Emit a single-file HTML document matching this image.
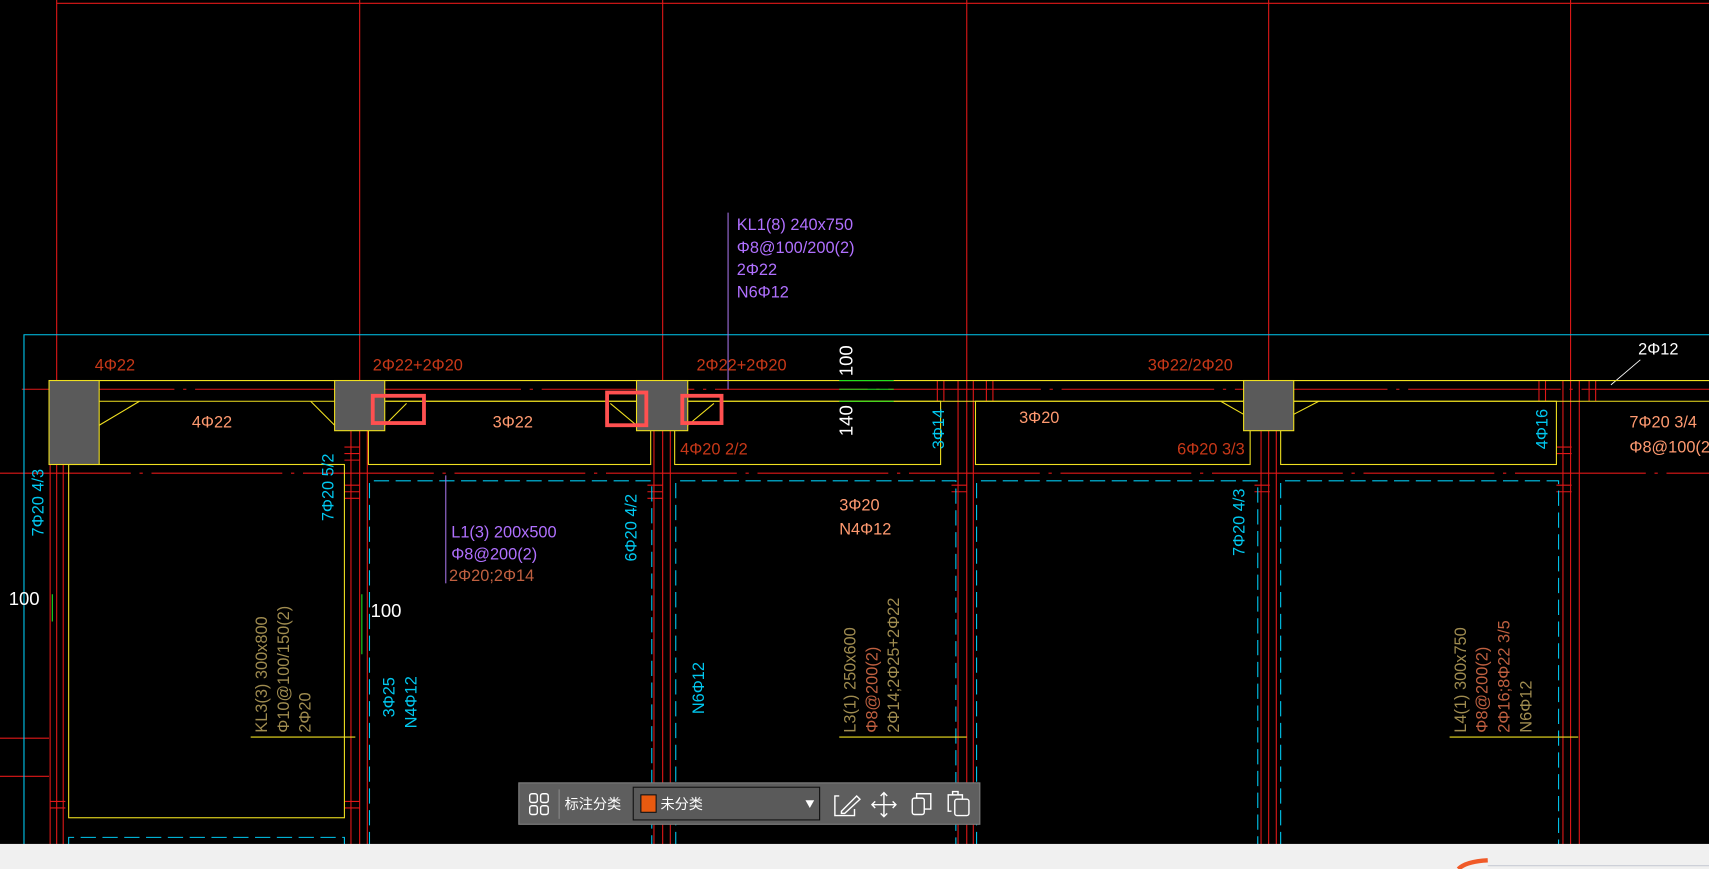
<!DOCTYPE html>
<html><head><meta charset="utf-8"><style>
html,body{margin:0;padding:0;background:#000;overflow:hidden}
svg{display:block}
text{font-family:"Liberation Sans","Noto Sans CJK SC",sans-serif}
</style></head><body>
<svg width="1709" height="869" viewBox="0 0 1568 797" preserveAspectRatio="none" xmlns="http://www.w3.org/2000/svg">
<rect width="1568" height="797" fill="#000"/>
<g stroke="#e01818" stroke-width="1" fill="none">
<line x1="52" y1="3" x2="1568" y2="3"/>
<line x1="52" y1="0" x2="52" y2="349"/>
<line x1="330" y1="0" x2="330" y2="797"/>
<line x1="608" y1="0" x2="608" y2="797"/>
<line x1="887" y1="0" x2="887" y2="797"/>
<line x1="1164" y1="0" x2="1164" y2="797"/>
<line x1="1441" y1="0" x2="1441" y2="797"/>
<line x1="52" y1="426" x2="52" y2="797"/>
<line x1="0" y1="434" x2="1568" y2="434" stroke-dasharray="120,8,3,8"/>
<line x1="20" y1="357" x2="1568" y2="357" stroke-dasharray="140,8,3,8"/>
<line x1="0" y1="677" x2="45" y2="677"/>
<line x1="0" y1="712" x2="45" y2="712"/>
<line x1="322" y1="395" x2="322" y2="797"/><line x1="337" y1="395" x2="337" y2="797"/>
<line x1="600" y1="395" x2="600" y2="797"/><line x1="615" y1="395" x2="615" y2="797"/>
<line x1="879" y1="349" x2="879" y2="797"/><line x1="893" y1="349" x2="893" y2="797"/>
<line x1="1157" y1="395" x2="1157" y2="797"/><line x1="1171" y1="395" x2="1171" y2="797"/>
<line x1="1434" y1="349" x2="1434" y2="797"/><line x1="1449" y1="349" x2="1449" y2="797"/>
<line x1="46" y1="426" x2="46" y2="797"/><line x1="58" y1="426" x2="58" y2="797"/>
<line x1="860" y1="349" x2="860" y2="368"/><line x1="866" y1="349" x2="866" y2="368"/>
<line x1="905" y1="349" x2="905" y2="368"/><line x1="911" y1="349" x2="911" y2="368"/>
<line x1="1412" y1="349" x2="1412" y2="368"/><line x1="1418" y1="349" x2="1418" y2="368"/>
<line x1="1458" y1="349" x2="1458" y2="368"/><line x1="1464" y1="349" x2="1464" y2="368"/>
</g>
<g stroke="#e01818" stroke-width="1">
<path d="M316 410h14M316 416h14M316 422h14M316 445h14M316 451h14M316 457h14M594 445h14M594 451h14M594 457h14M873 445h14M873 451h14M1151 445h14M1151 451h14M1428 445h14M1428 451h14M1428 410h14M1428 416h14M316 735h14M316 741h14M46 735h14M46 741h14"/>
</g>
<g stroke="#00c8f0" stroke-width="1" fill="none">
<path d="M22 797V307H1568"/>
<path d="M339 797V441H598V797M620 797V441H877V797M896 797V441H1154V797M1175 797V441H1430V797M63 797V768H316V797" stroke-dasharray="14,6"/>
</g>
<line x1="668" y1="195" x2="668" y2="357" stroke="#a070e0"/>
<line x1="409" y1="436" x2="409" y2="535" stroke="#a070e0"/>
<line x1="1478" y1="353" x2="1505" y2="330" stroke="#fff" stroke-width=".8"/>
<g stroke="#f0e020" stroke-width="1" fill="none">
<line x1="45" y1="349" x2="1568" y2="349"/>
<path d="M91 368H307M353 368H584M631 368H1141M1187 368H1568"/>
<rect x="63" y="426" width="253" height="324"/>
<rect x="338" y="368" width="259" height="58"/>
<rect x="619" y="368" width="244" height="58"/>
<rect x="895" y="368" width="252" height="58"/>
<rect x="1175" y="368" width="253" height="58"/>
<path d="M91 390L128 368M307 390L285 368M353 390L373 370M584 390L560 370M631 390L655 370M1141 380L1120 368M1187 380L1210 368"/>
<line x1="230" y1="676" x2="326" y2="676"/>
<line x1="770" y1="676" x2="887" y2="676"/>
<line x1="1330" y1="676" x2="1448" y2="676"/>
</g>
<g fill="#5a5a5a" stroke="#f0e020" stroke-width="1">
<rect x="45" y="349" width="46" height="77"/>
<rect x="307" y="349" width="46" height="46"/>
<rect x="584" y="349" width="47" height="46"/>
<rect x="1141" y="349" width="46" height="46"/>
</g>
<g stroke="#20e020" stroke-width="1">
<path d="M770 349H820M770 357H820M770 368H820M48 545V570M332 545V600"/>
</g>
<g stroke="#ff5050" stroke-width="3.5" fill="none">
<rect x="342" y="363" width="47" height="25"/>
<rect x="557" y="360" width="36" height="30"/>
<rect x="626" y="363" width="36" height="25"/>
</g>
<g font-size="15">
<g fill="#c83818">
<text x="87" y="340">4Φ22</text>
<text x="342" y="340">2Φ22+2Φ20</text>
<text x="639" y="340">2Φ22+2Φ20</text>
<text x="1053" y="340">3Φ22/2Φ20</text>
<text x="624" y="417">4Φ20 2/2</text>
<text x="1080" y="417">6Φ20 3/3</text>
<text x="412" y="533" fill="#c06040">2Φ20;2Φ14</text>
</g>
<g fill="#ff9a70">
<text x="176" y="392">4Φ22</text>
<text x="452" y="392">3Φ22</text>
<text x="935" y="388">3Φ20</text>
<text x="770" y="468">3Φ20</text>
<text x="1495" y="392">7Φ20 3/4</text>
<text x="1495" y="415">Φ8@100(2)</text>
</g>
<text x="770" y="490" fill="#ff9a70">N4Φ12</text>
<g fill="#b070ff">
<text x="676" y="211">KL1(8) 240x750</text>
<text x="676" y="232">Φ8@100/200(2)</text>
<text x="676" y="252">2Φ22</text>
<text x="676" y="273">N6Φ12</text>
<text x="414" y="493">L1(3) 200x500</text>
<text x="414" y="513">Φ8@200(2)</text>
</g>
<text x="1503" y="325" fill="#fff">2Φ12</text>
<text x="8" y="555" fill="#fff" font-size="17">100</text>
<text x="340" y="566" fill="#fff" font-size="17">100</text>
<g fill="#fff" font-size="17" transform="rotate(-90)"><text x="-400" y="782">140</text><text x="-345" y="782">100</text></g>
<g fill="#00c8f0" transform="rotate(-90)">
<text x="-492" y="40">7Φ20 4/3</text>
<text x="-478" y="306">7Φ20 5/2</text>
<text x="-515" y="584">6Φ20 4/2</text>
<text x="-510" y="1142">7Φ20 4/3</text>
<text x="-412" y="866">3Φ14</text>
<text x="-412" y="1420">4Φ16</text>
<text x="-658" y="362">3Φ25</text>
<text x="-668" y="382">N4Φ12</text>
<text x="-655" y="646">N6Φ12</text>
</g>
<g fill="#a08c50" transform="rotate(-90)">
<text x="-672" y="245">KL3(3) 300x800</text>
<text x="-672" y="265">Φ10@100/150(2)</text>
<text x="-672" y="285">2Φ20</text>
<text x="-672" y="785">L3(1) 250x600</text>
<text x="-672" y="1345">L4(1) 300x750</text>
</g>
<g fill="#c06040" transform="rotate(-90)">
<text x="-672" y="805">Φ8@200(2)</text>
<text x="-672" y="1365">Φ8@200(2)</text>
<text x="-672" y="1385">2Φ16;8Φ22 3/5</text>
</g>
<g fill="#a08c50" transform="rotate(-90)">
<text x="-672" y="825">2Φ14;2Φ25+2Φ22</text>
<text x="-672" y="1405">N6Φ12</text>
</g>
</g>
<rect x="0" y="774" width="1568" height="23" fill="#f0f0f0"/>
<path d="M1338 797Q1345 790 1365 789" stroke="#f05a28" stroke-width="4" fill="none"/>
<line x1="1365" y1="794" x2="1568" y2="794" stroke="#c8ccd4"/>
<rect x="476" y="718" width="423" height="38" fill="#5e5e5e" stroke="#808080"/>
<g stroke="#fff" stroke-width="1.3" fill="none">
<rect x="486" y="728" width="7" height="8" rx="2"/><rect x="496" y="728" width="7" height="8" rx="2"/>
<rect x="486" y="739" width="7" height="8" rx="2"/><rect x="496" y="739" width="7" height="8" rx="2"/>
<path d="M770 730H766V748H784V742M772 744L786 730L789 733L775 746H772Z"/>
<path d="M811 727V749M800 738H822M808 730L811 727L814 730M808 746L811 749L814 746M803 735L800 738L803 741M819 735L822 738L819 741"/>
<rect x="837" y="732" width="11" height="15" rx="2"/><path d="M841 732V728H854V742H848"/>
<rect x="876" y="733" width="13" height="15" rx="2"/><path d="M873 744H870V729H883V733M874 729V726H879V729"/>
</g>
<line x1="513" y1="724" x2="513" y2="751" stroke="#888"/>
<text x="518" y="742" fill="#fff" font-size="13">标注分类</text>
<rect x="581" y="722" width="171" height="30" fill="#5a5a5a" stroke="#111"/>
<rect x="588" y="729" width="14" height="16" fill="#e85a10" stroke="#111"/>
<text x="606" y="742" fill="#fff" font-size="13">未分类</text>
<path d="M739 734h8l-4 7z" fill="#fff"/>
</svg>
</body></html>
